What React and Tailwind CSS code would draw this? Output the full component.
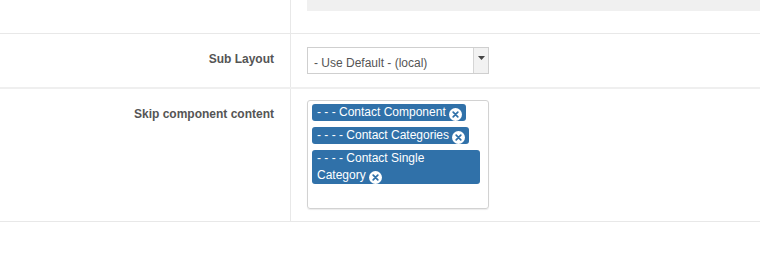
import React from "react";

const font = { fontFamily: '"Liberation Sans", Arial, sans-serif' };

function RemoveIcon() {
    return (
        <span className="inline-flex items-center justify-center w-[13px] h-[13px] rounded-full bg-white align-[-2px] ml-[3px]">
            <svg width="7" height="7" viewBox="0 0 7 7">
                <path d="M1.2 1.2 L5.8 5.8 M5.8 1.2 L1.2 5.8" stroke="#3071a9" strokeWidth="1.7" strokeLinecap="round" />
            </svg>
        </span>
    );
}

function Chip({ children }) {
    return (
        <div className="max-w-[168px] bg-[#3071a9] text-white rounded-[3px] pl-[5px] pr-[4px] leading-[17px]">
            {children}
            <RemoveIcon />
        </div>
    );
}

export default function App() {
    return (
        <div className="w-[760px] h-[271px] bg-white text-[12px] text-[#555]" style={font}>
            {/* top row */}
            <div className="flex h-[34px] border-b border-[#e8e8e8]">
                <div className="w-[291px] border-r border-[#e8e8e8]"></div>
                <div className="flex-1 pl-[16px]">
                    <div className="h-[11px] bg-[#f0f0f0]"></div>
                </div>
            </div>

            {/* Sub Layout */}
            <div className="flex h-[55px] border-b-2 border-[#efefef]">
                <div className="w-[291px] border-r border-[#e8e8e8] text-right pr-[16px] pt-[16px] font-bold">
                    Sub Layout
                </div>
                <div className="flex-1 pl-[16px] pt-[13px]">
                    <div className="flex w-[182px] h-[27px] border border-[#cfcfcf] bg-white">
                        <div className="flex-1 pl-[6px] pt-[6px] text-[#555]">- Use Default - (local)</div>
                        <div className="w-[15px] bg-[#f2f2f2] border-l border-[#d5d5d5] flex justify-center pt-[8px]">
                            <svg width="7" height="4" viewBox="0 0 7 4">
                                <path d="M0 0 H7 L3.5 4 Z" fill="#444" />
                            </svg>
                        </div>
                    </div>
                </div>
            </div>

            {/* Skip component content */}
            <div className="flex h-[133px] border-b border-[#e8e8e8]">
                <div className="w-[291px] border-r border-[#e8e8e8] text-right pr-[16px] pt-[16px] font-bold">
                    Skip component content
                </div>
                <div className="flex-1 pl-[16px] pt-[11px]">
                    <div className="flex flex-col items-start gap-[6px] w-[182px] h-[109px] border border-[#d2d2d2] rounded-[3px] shadow-[0_1px_1px_rgba(0,0,0,0.08)] pl-[4px] pt-[3px]">
                        <Chip>- - - Contact Component</Chip>
                        <Chip>- - - - Contact Categories</Chip>
                        <Chip>- - - - Contact Single Category</Chip>
                    </div>
                </div>
            </div>
        </div>
    );
}
